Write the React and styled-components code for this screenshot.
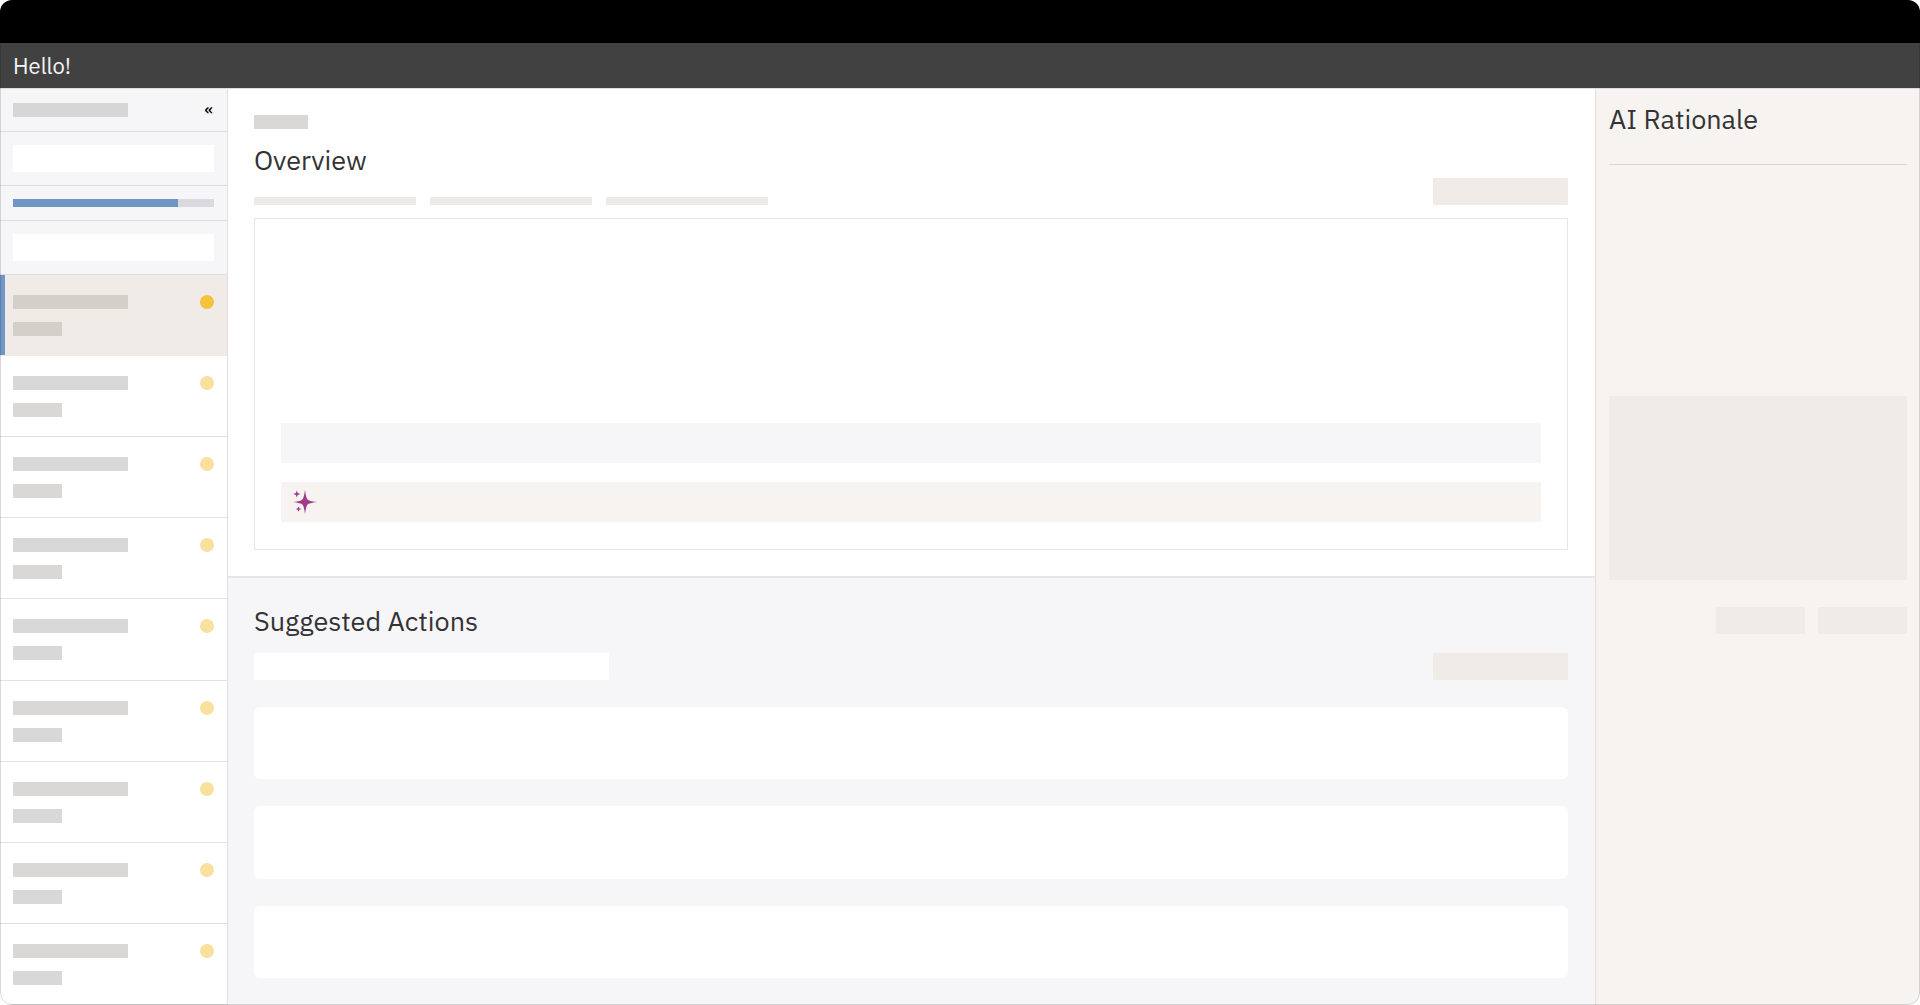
import React from "react";
import styled, { createGlobalStyle } from "styled-components";

const GlobalStyle = createGlobalStyle`
  *, *::before, *::after { box-sizing: border-box; }
  body {
    margin: 0;
    background: #fff;
    color: #333335;
    font-family: "IBM Plex Sans", "Open Sans", "Noto Sans", sans-serif;
  }
  button, input { font: inherit; color: inherit; }
`;

const Shell = styled.div`
  position: relative;
  display: flex;
  flex-direction: column;
  min-height: 100vh;
  border-radius: 12px;
  overflow: hidden;

  &::after {
    content: "";
    position: absolute;
    inset: 0;
    border: 1px solid rgba(0, 0, 0, 0.14);
    border-radius: 12px;
    pointer-events: none;
  }
`;

const TopStrip = styled.div`
  height: 43px;
  background: #000;
`;

const Banner = styled.header`
  display: flex;
  align-items: center;
  height: 45px;
  padding: 0 13px;
  background: #414141;
  color: #f4f4f4;
  font-size: 22px;
  line-height: 28px;
`;

const Body = styled.div`
  flex: 1;
  display: grid;
  grid-template-columns: 228px minmax(0, 1fr) 325px;
  border-top: 1px solid #dcdcdc;
`;

const Sidebar = styled.nav`
  display: flex;
  flex-direction: column;
  border-right: 1px solid #e0e0e2;
  background: #f6f6f9;
`;

const SideSection = styled.div`
  display: flex;
  align-items: center;
  justify-content: space-between;
  padding: ${(p) => p.$pad || 13}px 13px;
  border-bottom: 1px solid #dddde0;
`;

const Bar = styled.div`
  width: ${(p) => p.$width}px;
  height: ${(p) => p.$height || 14}px;
  background: ${(p) => p.$color || "#d9d8d6"};
`;

const CollapseButton = styled.button`
  display: flex;
  align-items: flex-start;
  height: 14px;
  padding: 0 1px;
  border: 0;
  background: none;
  color: #000;
  font-size: 16px;
  font-weight: 500;
  line-height: 12px;
  cursor: pointer;
`;

const Field = styled.input`
  width: ${(p) => p.$width || "100%"};
  height: 27px;
  padding: 0 8px;
  border: 0;
  border-radius: 1px;
  background: #fff;
  font-size: 14px;
`;

const Track = styled.div`
  width: 100%;
  height: 8px;
  background: #dadade;
`;

const Fill = styled.div`
  height: 100%;
  background: #7096c6;
`;

const ItemList = styled.ul`
  flex: 1;
  display: flex;
  flex-direction: column;
  margin: 0;
  padding: 0;
  list-style: none;
`;

const Item = styled.li`
  flex: 1;
  display: flex;
  justify-content: space-between;
  min-height: 81px;
  padding: 20px 13px 0;
  border-bottom: 1px solid ${(p) => (p.$active ? "#f0ebe7" : "#e2e2e2")};
  background: ${(p) => (p.$active ? "#f0ebe7" : "#fff")};
  box-shadow: ${(p) => (p.$active ? "inset 5px 0 0 #7096c6" : "none")};
`;

const ItemText = styled.div`
  display: flex;
  flex-direction: column;
  gap: 13px;
`;

const Dot = styled.span`
  width: 14px;
  height: 14px;
  border-radius: 50%;
  background: ${(p) => (p.$active ? "#f4c23c" : "#f9e09d")};
`;

const Main = styled.main`
  display: flex;
  flex-direction: column;
`;

const Heading = styled.h2`
  margin: 0;
  font-size: 27px;
  font-weight: 400;
  line-height: 36px;
`;

const OverviewSection = styled.section`
  padding: 26px 27px 26px 26px;
  border-bottom: 2px solid #e6e6e8;
  background: #fff;
`;

const OverviewTitle = styled(Heading)`
  margin-top: 13px;
`;

const ToolRow = styled.div`
  display: flex;
  align-items: ${(p) => p.$align || "center"};
  justify-content: space-between;
  margin-bottom: ${(p) => p.$gap}px;
`;

const Tabs = styled.div`
  display: flex;
  gap: 14px;
`;

const SoftButton = styled.button`
  width: ${(p) => p.$width}px;
  height: 27px;
  padding: 0;
  border: 0;
  border-radius: 1px;
  background: ${(p) => p.$color || "#f0ebe6"};
  cursor: pointer;
`;

const Card = styled.div`
  display: flex;
  flex-direction: column;
  justify-content: flex-end;
  gap: 19px;
  min-height: 332px;
  padding: 26px 26px 27px;
  border: 1px solid #e6e6e8;
`;

const Strip = styled.div`
  display: flex;
  align-items: center;
  height: 40px;
  padding: 0 12px;
  border-radius: 1px;
  background: ${(p) => p.$color};
`;

const ActionsSection = styled.section`
  flex: 1;
  display: flex;
  flex-direction: column;
  padding: 25px 27px 27px 26px;
  background: #f6f6f9;
`;

const ActionsTitle = styled(Heading)`
  margin-bottom: 14px;
`;

const ActionList = styled.div`
  flex: 1;
  display: flex;
  flex-direction: column;
  gap: 27px;
`;

const ActionCard = styled.div`
  flex: 1;
  min-height: 72px;
  border-radius: 6px;
  background: #fff;
`;

const Rationale = styled.aside`
  padding: 12px 13px 26px;
  border-left: 1px solid #e3dfdd;
  background: #f7f3f0;
`;

const RationaleHead = styled.div`
  padding-bottom: 27px;
  border-bottom: 1px solid #dad7d4;
`;

const RationalePanel = styled.div`
  height: 184px;
  margin-top: 231px;
  background: #efebe6;
`;

const ButtonRow = styled.div`
  display: flex;
  justify-content: flex-end;
  gap: 13px;
  margin-top: 27px;
`;

const star = (cx, cy, r, k) =>
  `M${cx} ${cy - r}L${cx + k} ${cy - k}L${cx + r} ${cy}L${cx + k} ${cy + k}L${cx} ${cy + r}L${cx - k} ${cy + k}L${cx - r} ${cy}L${cx - k} ${cy - k}Z`;

function Sparkle() {
  return (
    <svg width="26" height="26" viewBox="0 0 26 26" fill="#a23b89" aria-hidden="true">
      <path d="M12 1C13 7.500 13.700 10 14.900 10.700C16 11.600 18 12.100 24 13C18 13.900 16 14.400 14.900 15.300C13.700 16 13 18.500 12 25C11 18.500 10.300 16 9.100 15.300C8 14.400 6 13.900 0 13C6 12.100 8 11.600 9.100 10.700C10.300 10 11 7.500 12 1Z" />
      <path d={star(3.800, 5, 3.6, 0.9)} />
      <path d={star(5.500, 20, 2.8, 0.8)} />
    </svg>
  );
}

const items = Array.from({ length: 9 }, (_, i) => ({ id: i, active: i === 0 }));
const progress = 82;

export default function App() {
  return (
    <>
      <GlobalStyle />
      <Shell>
        <TopStrip />
        <Banner>Hello!</Banner>
        <Body>
          <Sidebar>
            <SideSection $pad={14}>
              <Bar $width={115} $color="#d7d5d6" />
              <CollapseButton type="button">«</CollapseButton>
            </SideSection>
            <SideSection>
              <Field type="text" aria-label="Filter" />
            </SideSection>
            <SideSection>
              <Track role="progressbar" aria-label="Progress" aria-valuenow={progress}>
                <Fill style={{ width: `${progress}%` }} />
              </Track>
            </SideSection>
            <SideSection>
              <Field type="text" aria-label="Search" />
            </SideSection>
            <ItemList>
              {items.map(({ id, active }) => (
                <Item key={id} $active={active}>
                  <ItemText>
                    <Bar $width={115} $color={active ? "#d3cfc9" : undefined} />
                    <Bar $width={49} $color={active ? "#d3cfc9" : undefined} />
                  </ItemText>
                  <Dot $active={active} />
                </Item>
              ))}
            </ItemList>
          </Sidebar>

          <Main>
            <OverviewSection>
              <Bar $width={54} />
              <OverviewTitle>Overview</OverviewTitle>
              <ToolRow $align="flex-end" $gap={13}>
                <Tabs>
                  <Bar $width={162} $height={8} $color="#ecebea" />
                  <Bar $width={162} $height={8} $color="#ecebea" />
                  <Bar $width={162} $height={8} $color="#ecebea" />
                </Tabs>
                <SoftButton type="button" $width={135} aria-label="Overview action" />
              </ToolRow>
              <Card>
                <Strip $color="#f6f6f9" />
                <Strip $color="#f7f3f0">
                  <Sparkle />
                </Strip>
              </Card>
            </OverviewSection>

            <ActionsSection>
              <ActionsTitle>Suggested Actions</ActionsTitle>
              <ToolRow $gap={27}>
                <Field type="text" $width="355px" aria-label="Search actions" />
                <SoftButton type="button" $width={135} aria-label="Add action" />
              </ToolRow>
              <ActionList>
                <ActionCard />
                <ActionCard />
                <ActionCard />
              </ActionList>
            </ActionsSection>
          </Main>

          <Rationale>
            <RationaleHead>
              <Heading>AI Rationale</Heading>
            </RationaleHead>
            <RationalePanel />
            <ButtonRow>
              <SoftButton type="button" $width={89} $color="#efebe6" aria-label="Dismiss" />
              <SoftButton type="button" $width={89} $color="#efebe6" aria-label="Accept" />
            </ButtonRow>
          </Rationale>
        </Body>
      </Shell>
    </>
  );
}
